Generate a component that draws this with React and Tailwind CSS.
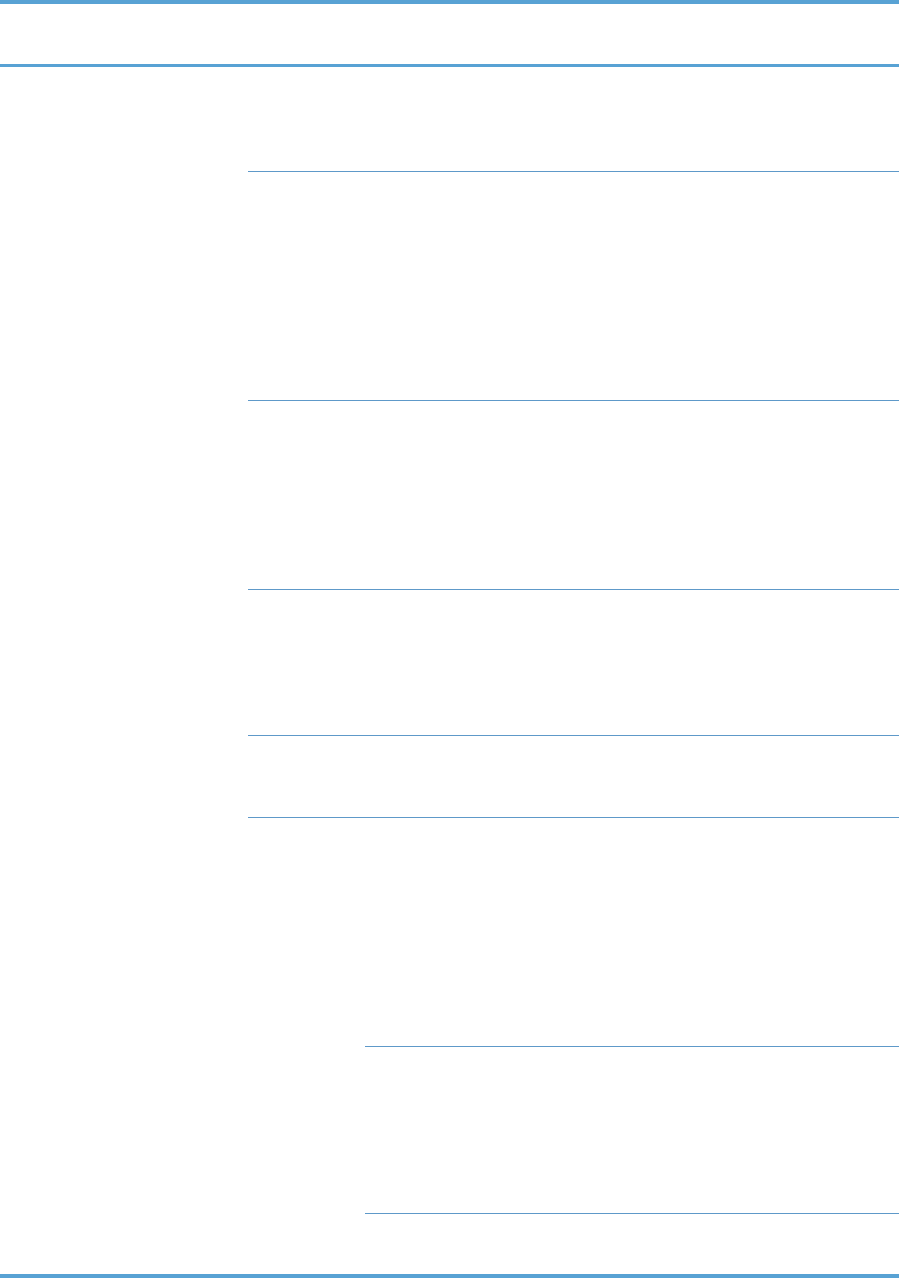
import React from 'react';

// Page frame with blue rules; body text areas are empty
export default function App() {
  return (
    <div className="w-[900px] h-[1278px] bg-white flex flex-col">
      {/* top rules */}
      <div className="h-[4px] w-[899px] bg-[#58a2d4]"></div>
      <div className="h-[60px]"></div>
      <div className="h-[3px] w-[899px] bg-[#58a2d4]"></div>

      {/* table body */}
      <div className="w-[899px] pl-[248px] flex flex-col">
        <div className="h-[104px]"></div>
        <div className="h-[229px] border-t border-[#5e99c9]"></div>
        <div className="h-[189px] border-t border-[#5e99c9]"></div>
        <div className="h-[146px] border-t border-[#5e99c9]"></div>
        <div className="h-[82px] border-t border-[#5e99c9]"></div>
        <div className="border-t border-[#5e99c9] flex flex-col">
          <div className="h-[228px]"></div>
          <div className="ml-[117px] flex flex-col">
            <div className="h-[167px] border-t border-[#5e99c9]"></div>
            <div className="border-t border-[#5e99c9]"></div>
          </div>
        </div>
      </div>

      <div className="flex-1"></div>
      {/* bottom rule */}
      <div className="h-[4px] w-[899px] bg-[#58a2d4]"></div>
    </div>
  );
}
